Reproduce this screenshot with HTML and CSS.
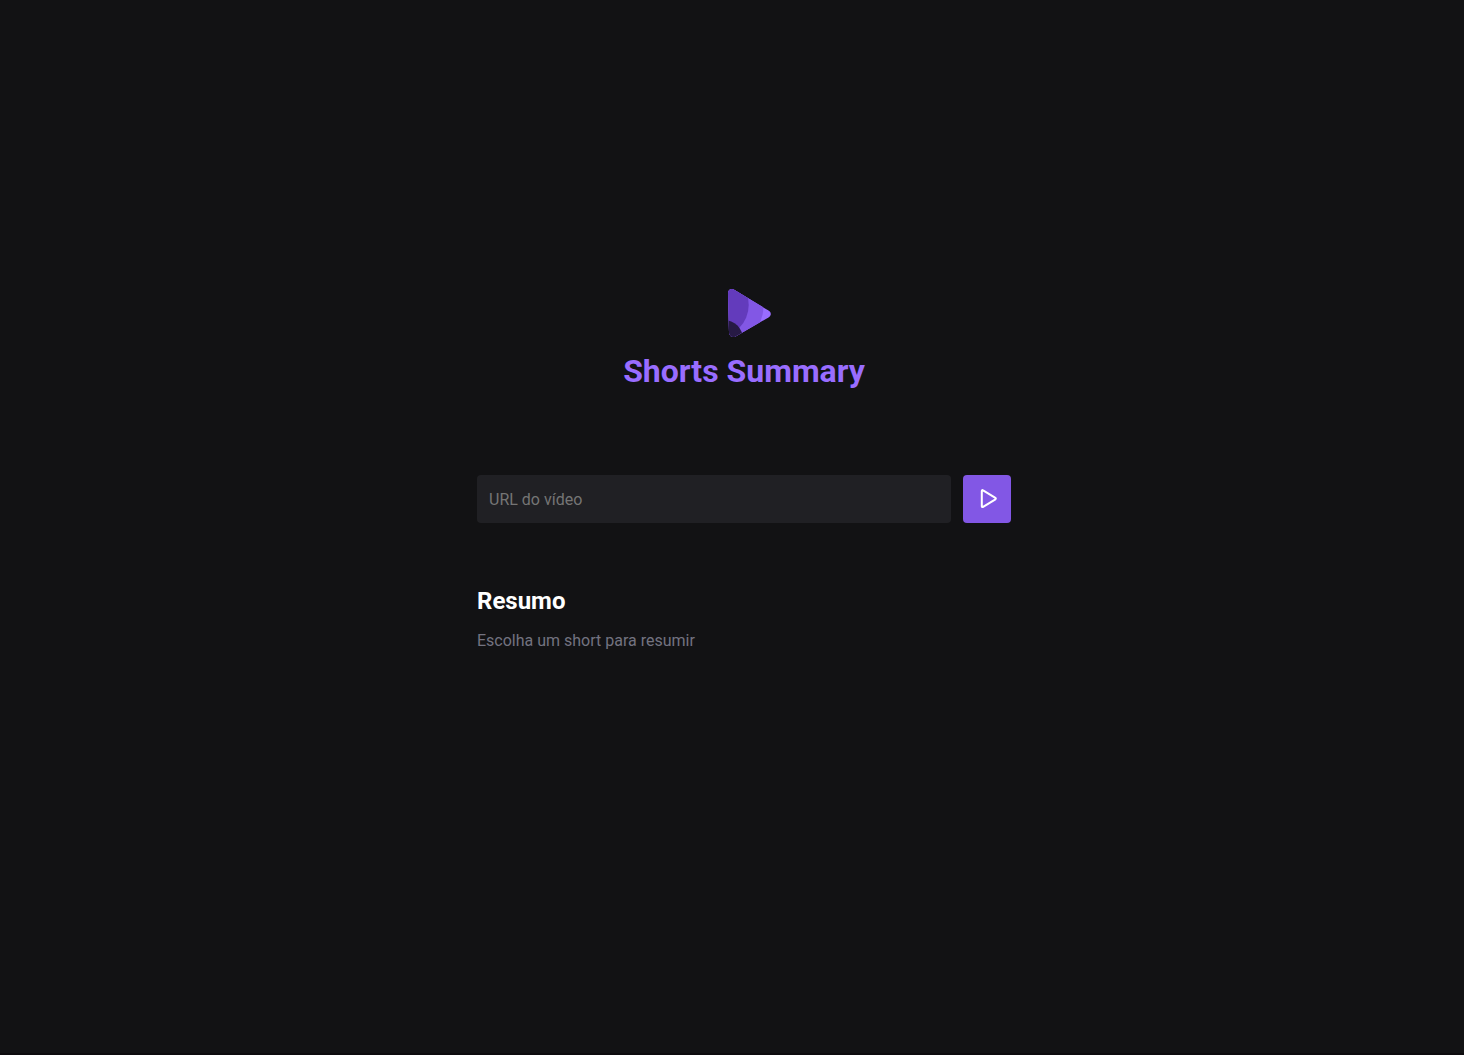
FILE: index.html
```html
<!DOCTYPE html>
<html lang="pt-BR">
<head>
  <meta charset="UTF-8">
  <meta name="viewport" content="width=device-width, initial-scale=1">
  <title>Shorts Summary</title>
  <link rel="stylesheet" href="styles.css">
</head>
<body>
  <main class="app">
    <header class="header">
      <svg class="logo" viewBox="0 0 64 64" aria-hidden="true">
        <defs>
          <clipPath id="play-shape">
            <path d="M16 12.500C16 8.500 19.200 6.900 22.600 9L56.500 29.600C59.600 31.500 59.600 34.500 56.500 36.400L24 55.200C20.300 57.300 17.200 55.300 17 51.500Z"/>
          </clipPath>
        </defs>
        <g clip-path="url(#play-shape)">
          <rect width="64" height="64" fill="#996dff"/>
          <circle cx="9" cy="25" r="42.500" fill="#8257e5"/>
          <circle cx="4" cy="24" r="32.700" fill="#633bbc"/>
          <circle cx="12" cy="58" r="19" fill="#271a45"/>
        </g>
      </svg>
      <h1 class="title">Shorts Summary</h1>
    </header>

    <form class="search">
      <input class="url" type="url" placeholder="URL do vídeo" aria-label="URL do vídeo">
      <button class="submit" type="button" aria-label="Resumir">
        <svg class="play" viewBox="0 0 24 24" aria-hidden="true">
          <path d="M6.800 4V19.200C6.800 20 7.500 20.300 8.100 19.900L20.400 12.300C21 11.900 21 11.300 20.400 10.900L8.100 3.300C7.500 2.900 6.800 3.200 6.800 4Z"/>
        </svg>
      </button>
    </form>

    <section class="summary">
      <h2 class="heading">Resumo</h2>
      <p class="content">Escolha um short para resumir</p>
    </section>
  </main>
</body>
</html>
```

FILE: styles.css
```css
* {
  box-sizing: border-box;
  margin: 0;
  padding: 0;
}

body {
  min-height: 100vh;
  display: flex;
  align-items: center;
  justify-content: center;
  padding-left: 24px;
  border-bottom: 2px solid #0d0b0e;
  background: #121214;
  color: #fff;
  font-family: Roboto, sans-serif;
  font-size: 16px;
}

.app {
  width: 100%;
  max-width: 534px;
}

.header {
  display: flex;
  flex-direction: column;
  align-items: center;
  gap: 6px;
  margin-bottom: 84px;
}

.logo {
  width: 64px;
  height: 64px;
}

.title {
  color: #996dff;
  font-size: 32px;
  line-height: 40px;
}

.search {
  display: flex;
  gap: 12px;
  margin-bottom: 62px;
}

.url {
  flex: 1;
  min-width: 0;
  height: 48px;
  padding: 0 12px;
  border: 0;
  border-radius: 4px;
  background: #202024;
  color: #fff;
  font: inherit;
}

.url::placeholder {
  color: #757575;
}

.submit {
  display: grid;
  place-items: center;
  width: 48px;
  height: 48px;
  border: 0;
  border-radius: 4px;
  background: #8257e5;
  cursor: pointer;
}

.play {
  width: 24px;
  height: 24px;
  fill: none;
  stroke: #fff;
  stroke-width: 2;
}

.summary {
  min-height: 187px;
}

.heading {
  margin-bottom: 12px;
  font-size: 24px;
  line-height: 32px;
}

.content {
  color: #737380;
  line-height: 24px;
}
```
